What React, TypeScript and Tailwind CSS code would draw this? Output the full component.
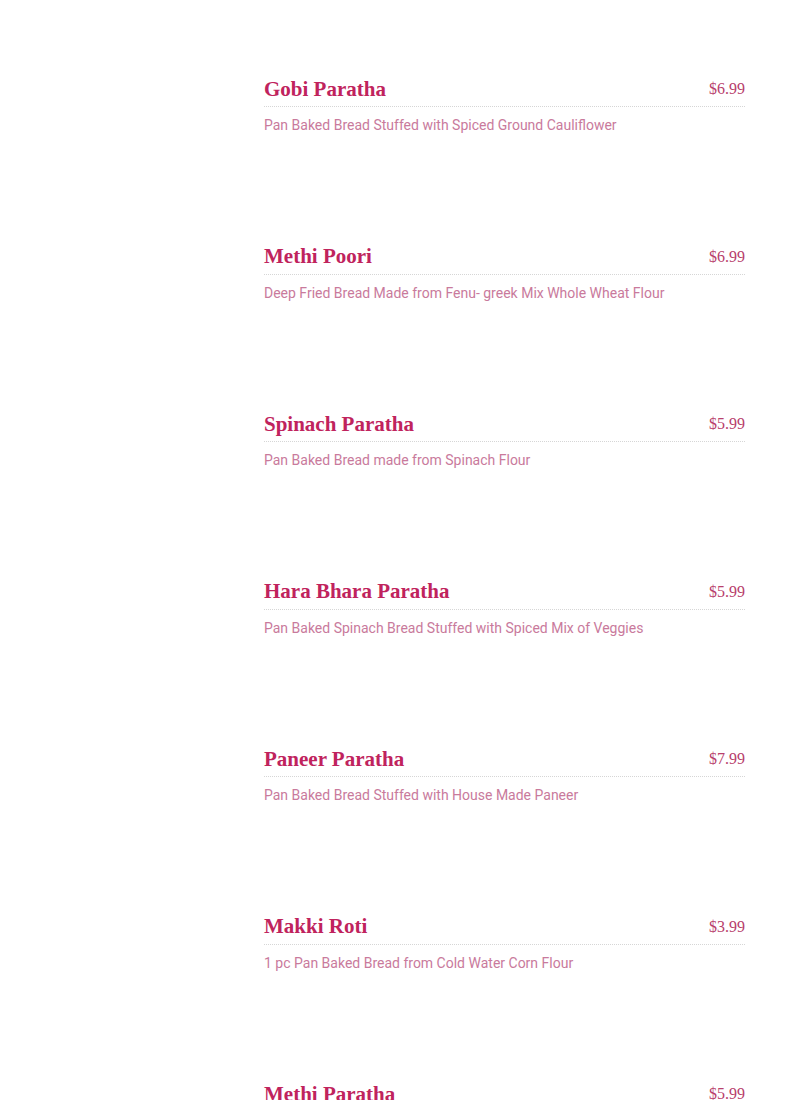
import React from "react";

const items = [
  { name: "Gobi Paratha", price: "$6.99", desc: "Pan Baked Bread Stuffed with Spiced Ground Cauliflower" },
  { name: "Methi Poori", price: "$6.99", desc: "Deep Fried Bread Made from Fenu- greek Mix Whole Wheat Flour" },
  { name: "Spinach Paratha", price: "$5.99", desc: "Pan Baked Bread made from Spinach Flour" },
  { name: "Hara Bhara Paratha", price: "$5.99", desc: "Pan Baked Spinach Bread Stuffed with Spiced Mix of Veggies" },
  { name: "Paneer Paratha", price: "$7.99", desc: "Pan Baked Bread Stuffed with House Made Paneer" },
  { name: "Makki Roti", price: "$3.99", desc: "1 pc Pan Baked Bread from Cold Water Corn Flour" },
  { name: "Methi Paratha", price: "$5.99", desc: "Pan Baked Bread Stuffed with Fenugreek Leaves" },
];

export default function App() {
  return (
    <div className="w-[785px] h-[1100px] overflow-hidden bg-white pl-[264px] pr-[40px] pt-[72px]">
      {items.map((it) => (
        <div key={it.name} className="h-[167.5px]">
          <div className="flex h-[35px] items-center justify-between border-b border-dotted border-[#d6d6d6]">
            <span className="font-['Liberation_Serif',serif] text-[21px] font-bold text-[#c0235d] leading-none">
              {it.name}
            </span>
            <span className="font-['Liberation_Serif',serif] text-[16px] text-[#b8406c] leading-none">
              {it.price}
            </span>
          </div>
          <div className="mt-[8px] font-['Roboto',sans-serif] text-[14px] leading-[20px] text-[#c97a9c]">
            {it.desc}
          </div>
        </div>
      ))}
    </div>
  );
}
